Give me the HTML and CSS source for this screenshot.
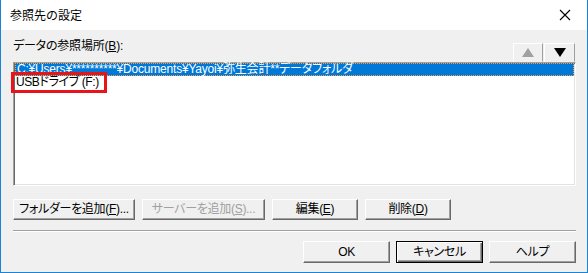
FILE: index.html
```html
<!DOCTYPE html>
<html lang="ja">
<head>
  <meta charset="UTF-8">
  <title>参照先の設定</title>
  <link rel="stylesheet" href="styles.css">
</head>
<body>
<div class="window">
  <div class="titlebar">
    <span class="title">参照先の設定</span>
    <svg class="close" width="12" height="12" viewBox="0 0 12 12">
      <path d="M1 1 L11 11 M11 1 L1 11" stroke="#000" stroke-width="1.1" fill="none"/>
    </svg>
  </div>
  <div class="content">
    <div class="list-header">
      <span class="label">データの参照場所(<u>B</u>):</span>
      <div class="arrows">
        <button class="arrow-btn" type="button">
          <svg width="12" height="9" viewBox="0 0 12 9"><polygon points="6,0 12,9 0,9" fill="#a0a0a0"/></svg>
        </button>
        <button class="arrow-btn" type="button">
          <svg width="12" height="9" viewBox="0 0 12 9"><polygon points="0,0 12,0 6,9" fill="#000"/></svg>
        </button>
      </div>
    </div>
    <div class="listbox">
      <div class="item selected">C:¥Users¥**********¥Documents¥Yayoi¥弥生会計**データフォルダ</div>
      <div class="item"><span class="marked">USBドライブ (F:)</span></div>
    </div>
    <div class="btn-row">
      <button class="btn w-folder" type="button">フォルダーを追加(<u>F</u>)...</button>
      <button class="btn w-server disabled" type="button">サーバーを追加(<u>S</u>)...</button>
      <button class="btn w-small" type="button">編集(<u>E</u>)</button>
      <button class="btn w-small" type="button">削除(<u>D</u>)</button>
    </div>
    <div class="separator"></div>
    <div class="footer">
      <button class="btn w-foot" type="button">OK</button>
      <button class="btn w-foot default" type="button">キャンセル</button>
      <button class="btn w-foot" type="button">ヘルプ</button>
    </div>
  </div>
</div>
</body>
</html>
```

FILE: styles.css
```css
body {
  margin: 0;
  padding: 0;
  font-family: "Noto Sans CJK JP", "Noto Sans", sans-serif;
  font-size: 12px;
  color: #000;
  background-color: #fff;
}

.window {
  width: 588px;
  height: 273px;
  box-sizing: border-box;
  border: 1px solid #1883d7;
  border-top: none;
  background-color: #f0f0f0;
  overflow: hidden;
}

.titlebar {
  height: 30px;
  background-color: #fff;
  display: flex;
  align-items: center;
  justify-content: space-between;
  padding: 0 16px 0 9px;
}

.title {
  font-size: 12px;
  line-height: 15px;
  margin-top: -1px;
}

.content {
  padding: 0 11px 0 12px;
  font-family: "Liberation Sans", "Noto Sans CJK JP", sans-serif;
  font-feature-settings: "palt";
  letter-spacing: -0.2px;
}

.list-header {
  display: flex;
  justify-content: space-between;
  padding-top: 9px;
}

.label {
  line-height: 15px;
}

.arrows {
  display: flex;
  gap: 1px;
  margin-top: 4px;
  margin-right: 1px;
}

.arrow-btn {
  width: 30px;
  height: 19px;
  padding: 0;
  border: 1px solid;
  border-color: #fff #a0a0a0 #f0f0f0 #fff;
  background-color: #f0f0f0;
  display: flex;
  align-items: center;
  justify-content: center;
}

.arrow-btn + .arrow-btn {
  width: 31px;
}

.listbox {
  height: 124px;
  box-sizing: border-box;
  border: 1px solid;
  border-color: #a0a0a0 #fff #fff #a0a0a0;
  box-shadow: inset 1px 1px #696969, inset -1px -1px #e3e3e3;
  background-color: #fff;
  padding: 0 1px 0 0;
}

.item {
  height: 13px;
  line-height: 13px;
  padding-left: 2px;
  white-space: nowrap;
}

.item.selected {
  box-sizing: border-box;
  margin-left: 1px;
  padding-left: 1px;
  background-color: #0078d7;
  color: #fff;
  border: 1px dotted #ff9a2e;
  line-height: 11px;
}

.marked {
  outline: 3px solid #e8141b;
  letter-spacing: -0.4px;
  margin-left: -2px;
  padding: 0 5px 1px 2px;
}

.btn-row {
  display: flex;
  gap: 7px;
  margin-top: 13px;
}

.btn {
  height: 21px;
  padding: 0;
  font-family: "Liberation Sans", "Noto Sans CJK JP", sans-serif;
  font-feature-settings: "palt";
  font-size: 12px;
  line-height: 15px;
  letter-spacing: -0.3px;
  white-space: nowrap;
  color: #000;
  background-color: #f0f0f0;
  border: 1px solid;
  border-color: #fff #696969 #696969 #fff;
  box-shadow: inset -1px -1px #a0a0a0;
}

.btn.disabled {
  color: #a0a0a0;
}

.w-folder {
  width: 122px;
}

.w-server {
  width: 123px;
}

.w-small {
  width: 86px;
}

.separator {
  margin-top: 10px;
  height: 1px;
  background-color: #a0a0a0;
  border-bottom: 1px solid #fff;
}

.footer {
  display: flex;
  justify-content: flex-end;
  gap: 6px;
  margin-top: 9px;
}

.w-foot {
  width: 87px;
  height: 22px;
}

.btn.default {
  border-color: #000;
  box-shadow: inset 1px 1px #fff, inset -1px -1px #696969, inset -2px -2px #a0a0a0;
}
```
